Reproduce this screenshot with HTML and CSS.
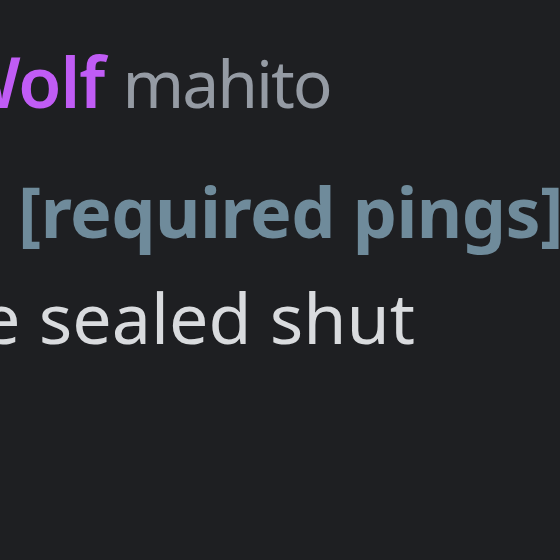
FILE: index.html
```html
<!DOCTYPE html>
<html lang="en">
<head>
  <meta charset="UTF-8" />
  <title>Message</title>
  <link rel="stylesheet" href="styles.css">
</head>
<body>
  <div class="message">
    <div class="header">
      <span class="username">Wolf</span>
      <span class="tag">mahito</span>
    </div>
    <div class="title">[required pings]</div>
    <div class="content">e sealed shut</div>
  </div>
</body>
</html>
```

FILE: styles.css
```css
* {
  box-sizing: border-box;
}
html, body {
  margin: 0;
  height: 100%;
  overflow: hidden;
}
body {
  background: #1e1f22;
  font-family: 'Noto Sans', 'Open Sans', sans-serif;
}
.message {
  padding-top: 31px;
  white-space: nowrap;
}
.header, .title, .content {
  font-size: 70px;
  line-height: 100px;
}
.header {
  margin-left: -46px;
}
.username {
  color: #c05cf5;
  font-weight: 600;
  letter-spacing: -1px;
}
.tag {
  color: #959ba4;
  font-size: 66px;
  letter-spacing: -2px;
}
.title {
  margin-top: 29px;
  margin-left: 18px;
  color: #6f8b9b;
  font-weight: 700;
  letter-spacing: -0.5px;
}
.content {
  margin-top: 6px;
  margin-left: -19px;
  color: #d9dbde;
}
```
